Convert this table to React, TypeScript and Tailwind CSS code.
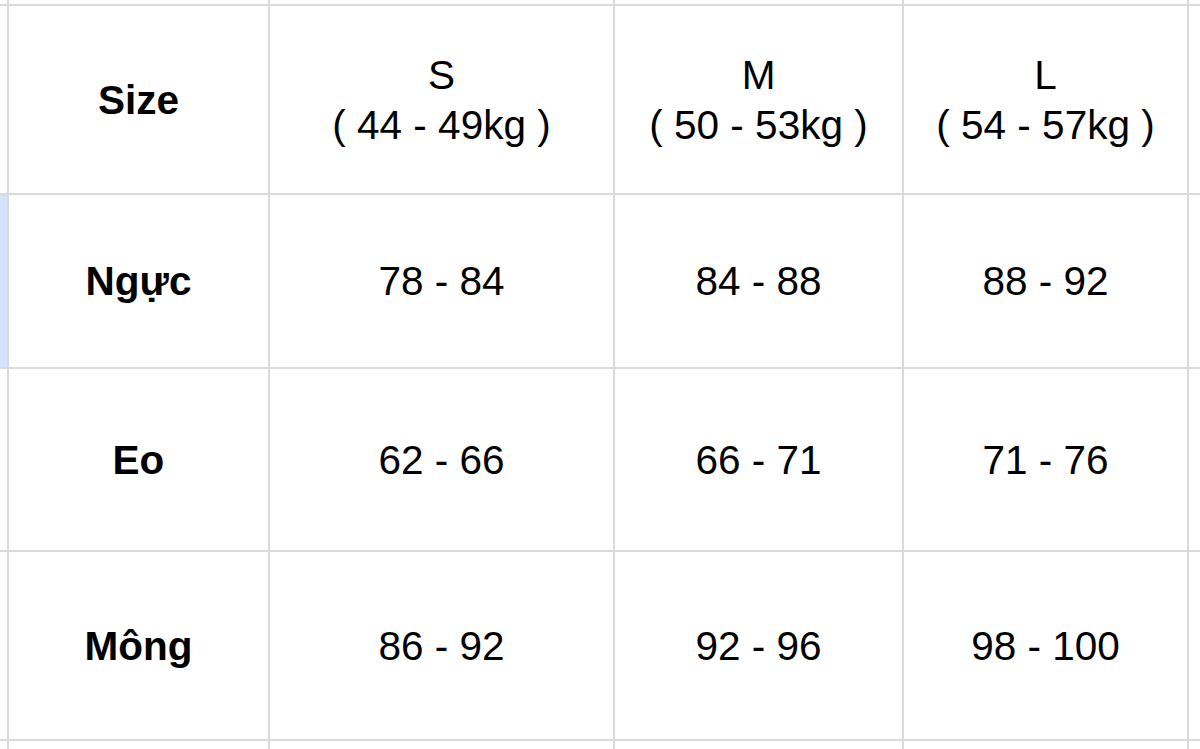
import { Fragment } from "react";

const columns = [
  { size: "S", range: "( 44 - 49kg )" },
  { size: "M", range: "( 50 - 53kg )" },
  { size: "L", range: "( 54 - 57kg )" },
];

const rows = [
  { label: "Ngực", values: ["78 - 84", "84 - 88", "88 - 92"], selected: true },
  { label: "Eo", values: ["62 - 66", "66 - 71", "71 - 76"], selected: false },
  { label: "Mông", values: ["86 - 92", "92 - 96", "98 - 100"], selected: false },
];

const cell = "bg-white flex items-center justify-center text-center";

export default function App() {
  return (
    <div
      className="w-[1200px] h-[749px] overflow-hidden bg-[#dadada] grid gap-[2px] grid-cols-[7px_259px_343px_287px_283px_1fr] grid-rows-[4px_187px_172px_181px_187px_1fr] text-[40.5px] leading-[50px] text-black"
      style={{ fontFamily: '"Liberation Sans", Arial, sans-serif' }}
    >
      {/* top spacer row */}
      {Array.from({ length: 6 }).map((_, i) => (
        <div key={`t${i}`} className="bg-white" />
      ))}

      {/* header row */}
      <div className="bg-white" />
      <div className={`${cell} font-bold`}>Size</div>
      {columns.map((c) => (
        <div key={c.size} className={`${cell} flex-col`}>
          <div>{c.size}</div>
          <div>{c.range}</div>
        </div>
      ))}
      <div className="bg-white" />

      {rows.map((r) => (
        <Fragment key={r.label}>
          <div className={r.selected ? "bg-[#d3e3fd]" : "bg-white"} />
          <div className={`${cell} font-bold`}>{r.label}</div>
          {r.values.map((v, i) => (
            <div key={i} className={cell}>
              {v}
            </div>
          ))}
          <div className="bg-white" />
        </Fragment>
      ))}

      {/* bottom spacer row */}
      {Array.from({ length: 6 }).map((_, i) => (
        <div key={`b${i}`} className="bg-white" />
      ))}
    </div>
  );
}
